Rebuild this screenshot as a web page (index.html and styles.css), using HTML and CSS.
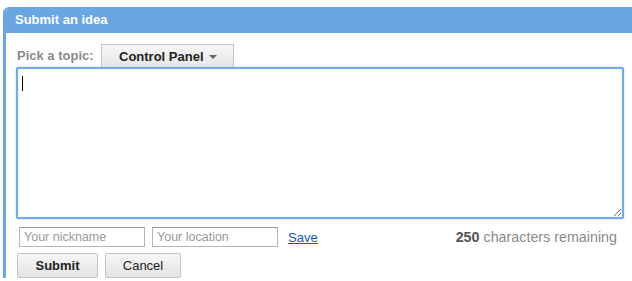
FILE: index.html
```
<!DOCTYPE html>
<html lang="en">
<head>
    <meta charset="UTF-8">
    <title>Submit an idea</title>
    <link rel="stylesheet" href="styles.css">
</head>
<body>
    <div class="idea-panel">
        <div class="idea-header">Submit an idea</div>
        <div class="idea-body">
            <div class="topic-row">
                <span class="topic-label">Pick a topic:</span>
                <button class="topic-btn">Control Panel <span class="caret"></span></button>
            </div>
            <div class="idea-box">
                <textarea class="idea-text"></textarea>
                <span class="cursor"></span>
            </div>
            <div class="meta-row">
                <input type="text" class="meta-input" placeholder="Your nickname">
                <input type="text" class="meta-input" placeholder="Your location">
                <a href="#" class="save-link">Save</a>
                <span class="remaining"><b>250</b> characters remaining</span>
            </div>
            <div class="action-row">
                <button class="btn btn-submit">Submit</button>
                <button class="btn">Cancel</button>
            </div>
        </div>
    </div>
</body>
</html>
```

FILE: styles.css
```
body {
    margin: 0;
    background: #ffffff;
    font-family: "Liberation Sans", Arial, sans-serif;
    font-size: 13px;
}

.idea-panel {
    margin: 7px 0 0 3px;
    border-left: 3px solid #6aa6e2;
    border-top-left-radius: 6px;
    overflow: hidden;
}

.idea-header {
    background: #6aa6e2;
    color: #ffffff;
    font-weight: bold;
    font-size: 13px;
    height: 26px;
    line-height: 26px;
    padding-left: 9px;
}

.idea-body {
    padding: 11px 0 0 10px;
}

.topic-row {
    display: flex;
    align-items: flex-end;
    height: 23px;
}

.topic-label {
    color: #8a8a8a;
    font-weight: bold;
    line-height: 23px;
    margin-left: 1px;
    width: 84px;
}

.topic-btn {
    width: 133px;
    height: 24px;
    margin: 0 0 -1px 0;
    padding: 0 0 0 17px;
    border: 1px solid #c4c4c4;
    border-bottom: none;
    background: linear-gradient(#f6f6f6, #e6e6e6);
    color: #222222;
    font-family: inherit;
    font-size: 13px;
    font-weight: bold;
    text-align: left;
}

.caret {
    display: inline-block;
    width: 0;
    height: 0;
    margin: 0 0 2px 2px;
    border-left: 4px solid transparent;
    border-right: 4px solid transparent;
    border-top: 4px solid #666666;
    vertical-align: middle;
}

.idea-box {
    position: relative;
    margin-right: 8px;
}

.idea-text {
    display: block;
    box-sizing: border-box;
    width: 100%;
    height: 152px;
    margin: 0;
    border: 2px solid #74aae6;
    border-radius: 2px;
    box-shadow: 0 0 2px #a9cbf1, inset 0 0 1px #9cc3ee;
    outline: none;
    resize: both;
}

.cursor {
    position: absolute;
    left: 6px;
    top: 9px;
    width: 1px;
    height: 15px;
    background: #000000;
}

.meta-row {
    display: flex;
    align-items: center;
    margin-top: 8px;
    padding-left: 3px;
    padding-right: 15px;
}

.meta-input {
    box-sizing: border-box;
    width: 126px;
    height: 20px;
    margin: 0 7px 0 0;
    padding: 1px 4px;
    border: 1px solid #b5b5b5;
    border-top-color: #999999;
    font-family: inherit;
    font-size: 12.5px;
}

.meta-input::placeholder {
    color: #9a9a9a;
}

.save-link {
    color: #1155cc;
    margin-left: 3px;
}

.remaining {
    margin-left: auto;
    color: #8a8a8a;
    font-size: 14.3px;
}

.remaining b {
    color: #555555;
}

.action-row {
    display: flex;
    gap: 7px;
    margin-top: 6px;
    padding-left: 1px;
}

.btn {
    height: 25px;
    border: 1px solid #c4c4c4;
    border-radius: 2px;
    background: linear-gradient(#f6f6f6, #e4e4e4);
    color: #222222;
    font-family: inherit;
    font-size: 13px;
    width: 76px;
}

.btn-submit {
    font-weight: bold;
    width: 81px;
}
```
